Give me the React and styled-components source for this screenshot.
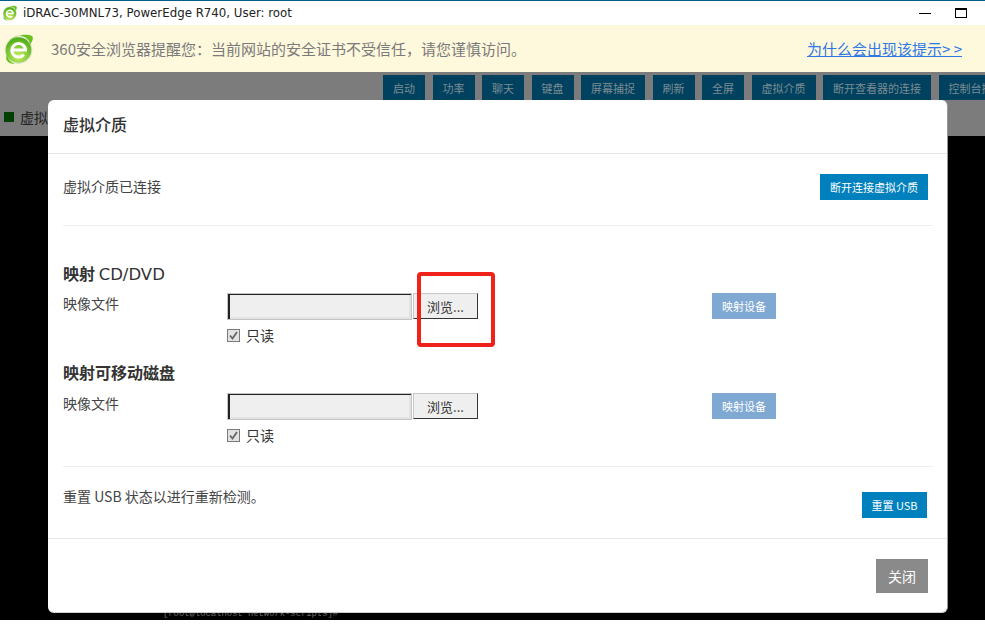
import React from "react";
import styled, { createGlobalStyle } from "styled-components";

const Global = createGlobalStyle`
  html, body { margin: 0; padding: 0; background: #fff; overflow: hidden; }
  body { font-family: "Liberation Sans", "Noto Sans CJK SC", sans-serif; }
  * { box-sizing: border-box; }
`;

const Page = styled.div`
  position: relative;
  width: 985px;
  height: 624px;
  overflow: hidden;
  background: #fff;
`;
const TitleBar = styled.div`
  height: 25px;
  border-top: 1px solid #005f88;
  display: flex;
  align-items: center;
  padding: 0 4px 0 2px;
  font-family: "DejaVu Sans", sans-serif;
  font-size: 11.8px;
  color: #222;
  gap: 5px;
`;
const TitleText = styled.span`
  flex: 1;
`;
const WinControls = styled.div`
  display: flex;
  align-items: center;
  gap: 24px;
  margin-right: 14px;
`;
const MinGlyph = styled.span`
  width: 12px;
  height: 1px;
  background: #000;
`;
const MaxGlyph = styled.span`
  width: 12px;
  height: 10px;
  border: 1px solid #000;
  border-top-width: 2px;
`;
const Notice = styled.div`
  height: 47px;
  background: #fef8dc;
  display: flex;
  align-items: center;
  padding-left: 3px;
  font-family: "Noto Sans CJK SC", sans-serif;
  font-size: 15px;
  color: #7a7a7a;
`;
const NoticeText = styled.span`
  margin-left: 16px;
  flex: 1;
  white-space: nowrap;
`;
const NoticeLink = styled.a`
  color: #2e78e6;
  text-decoration: underline;
  font-size: 15px;
  margin-right: 21px;
  white-space: nowrap;
`;
const CloseX = styled.span`
  color: #c8332a;
  font-weight: bold;
  font-size: 15px;
  line-height: 15px;
  flex: none;
  width: 2px;
  white-space: nowrap;
`;
const Console = styled.div`
  height: 548px;
  background: #000;
`;
const ToolArea = styled.div`
  height: 64px;
  background: #7c7c7c;
  padding-top: 3px;
`;
const Toolbar = styled.div`
  display: flex;
  gap: 7.5px;
  margin-left: 383px;
  width: 640px;
`;
const ToolButton = styled.div`
  height: 25px;
  width: ${(p) => p.$w}px;
  flex: none;
  background: #00415f;
  color: #7c8c92;
  font-family: "Noto Sans CJK SC", sans-serif;
  font-size: 11px;
  display: flex;
  align-items: center;
  justify-content: center;
  white-space: nowrap;
`;
const StatusRow = styled.div`
  display: flex;
  align-items: center;
  gap: 6px;
  margin: 2px 0 0 4px;
  height: 30px;
  color: #222;
  font-family: "Noto Sans CJK SC", sans-serif;
  font-size: 14px;
`;
const StatusDot = styled.span`
  width: 10px;
  height: 10px;
  background: #003f00;
`;
const TerminalLine = styled.div`
  position: absolute;
  left: 163px;
  top: 609px;
  color: #666;
  font-family: "Liberation Mono", monospace;
  font-size: 8.85px;
  line-height: 11px;
  height: 11px;
  overflow: hidden;
`;
const BottomStrip = styled.div`
  position: absolute;
  left: 0;
  right: 0;
  top: 620px;
  height: 4px;
  background: #fff;
`;
const Modal = styled.div`
  position: absolute;
  left: 48px;
  top: 100px;
  width: 900px;
  height: 513px;
  background: #fff;
  border-radius: 6px;
  border-right: 1px solid #999;
  border-bottom: 1px solid #ccc;
  display: flex;
  flex-direction: column;
  color: #333;
  font-family: "Noto Sans CJK SC", sans-serif;
`;
const ModalHeader = styled.div`
  height: 54px;
  border-bottom: 1px solid #e5e5e5;
  padding: 12px 15px 0;
  font-size: 16px;
  font-weight: 500;
  line-height: 24px;
  color: #333;
`;
const ModalBody = styled.div`
  height: 385px;
  padding: 0 15px 0 15px;
  border-bottom: 1px solid #e5e5e5;
`;
const ConnectedRow = styled.div`
  display: flex;
  justify-content: space-between;
  align-items: center;
  height: 72px;
  padding: 0 5px 6px 0;
  font-size: 14px;
  color: #444;
  border-bottom: 1px solid #eee;
  margin-right: -1px;
`;
const ConnectedText = styled.span`
  line-height: 20px;
  margin-top: -1px;
`;
const ActionButton = styled.div`
  background: ${(p) => (p.$muted ? "#7fa9d2" : "#0080bd")};
  color: #fff;
  font-size: 11px;
  height: 26px;
  width: ${(p) => p.$w}px;
  display: flex;
  align-items: center;
  justify-content: center;
  white-space: nowrap;
  flex: none;
`;
const SectionTitle = styled.div`
  font-size: 16px;
  font-weight: 700;
  color: #333;
  line-height: 22px;
  height: 22px;
  margin-top: ${(p) => p.$top}px;
`;
const LatinTitle = styled.span`
  font-family: "DejaVu Sans", sans-serif;
  font-weight: 400;
  font-size: 16.5px;
  color: #333;
`;
const FieldRow = styled.div`
  display: flex;
  margin-top: ${(p) => p.$top}px;
  height: 27px;
`;
const FieldLabel = styled.div`
  width: 164px;
  font-size: 14px;
  line-height: 20px;
  color: #444;
`;
const FileInput = styled.div`
  width: 185px;
  height: 27px;
  background: #efefef;
  border: 1px solid #c4c4c4;
  box-shadow: inset 2px 1px 0 #222, inset -2px -2px 0 #e3e3e3;
  margin-right: 1px;
`;
const BrowseButton = styled.div`
  width: 65px;
  height: 26px;
  background: #efefef;
  border: 1px solid;
  border-color: #c8c8c8 #333 #333 #c8c8c8;
  font-size: 13px;
  color: #333;
  display: flex;
  align-items: center;
  justify-content: center;
`;
const MapSlot = styled.div`
  margin-left: 234px;
`;
const ReadOnly = styled.div`
  display: flex;
  align-items: center;
  gap: 6px;
  margin: 8px 0 0 164px;
  height: 14px;
  font-size: 14px;
  color: #333;
`;
const CheckBox = styled.span`
  width: 13px;
  height: 13px;
  background: #e2e2e2;
  border: 1px solid #7a7a7a;
  display: flex;
  align-items: center;
  justify-content: center;
`;
const ResetRow = styled.div`
  display: flex;
  justify-content: space-between;
  align-items: flex-start;
  margin-top: 24px;
  padding: 19px 6px 0 0;
  border-top: 1px solid #eee;
  font-size: 14px;
  color: #444;
  margin-right: -1px;
`;
const ResetText = styled.div`
  line-height: 22px;
  margin-top: -1px;
`;
const ResetButton = styled.div`
  margin-top: 6px;
`;
const ModalFooter = styled.div`
  flex: 1;
  display: flex;
  justify-content: flex-end;
  padding: 20px 19px 0 0;
`;
const CloseButton = styled.div`
  width: 52px;
  height: 34px;
  background: #8a8a8a;
  color: #fff;
  font-size: 14px;
  display: flex;
  align-items: center;
  justify-content: center;
`;
const Annotation = styled.div`
  position: absolute;
  left: 417px;
  top: 272px;
  width: 78px;
  height: 75px;
  border: 4px solid #f0201a;
  border-radius: 4px;
`;

const Logo360 = ({ size, id }) => (
  <svg width={size} height={size} viewBox="0 0 32 32">
    <defs>
      <radialGradient id={id} cx="50%" cy="75%" r="70%">
        <stop offset="0%" stopColor="#c9ee62" />
        <stop offset="100%" stopColor="#4fae16" />
      </radialGradient>
    </defs>
    <circle cx="15.500" cy="17" r="13.500" fill="#eef2e4" stroke="#d8dccb" strokeWidth="0.800" />
    <circle cx="15.500" cy="17" r="12.800" fill={`url(#${id})`} />
    <path d="M9 17H22.500A6.800 6.800 0 1 0 20.800 21.800" fill="none" stroke="#fff" strokeWidth="3" />
    <path d="M6 9C11 2 24 0 29 3c2 2 0 6-2 9 0-4-3-8-9-9-5-1-9 2-12 6z" fill="#6cc022" />
    <path d="M4 21c1 5 3 8 8 10-3 0-7-1-8.500-4-.5-1.500-.2-3.500.5-6z" fill="#6cc022" />
  </svg>
);

const tools = [
  ["启动", 42], ["功率", 42], ["聊天", 42], ["键盘", 42], ["屏幕捕捉", 64],
  ["刷新", 42], ["全屏", 42], ["虚拟介质", 64], ["断开查看器的连接", 108], ["控制台播放", 75],
];

const FileField = ({ top }) => (
  <>
    <FieldRow $top={top}>
      <FieldLabel>映像文件</FieldLabel>
      <FileInput />
      <BrowseButton>浏览...</BrowseButton>
      <MapSlot><ActionButton $muted $w={64}>映射设备</ActionButton></MapSlot>
    </FieldRow>
    <ReadOnly>
      <CheckBox>
        <svg width="11" height="11" viewBox="0 0 11 11">
          <path d="M2 5.500l2.500 3L9 2" fill="none" stroke="#666" strokeWidth="1.800" />
        </svg>
      </CheckBox>
      只读
    </ReadOnly>
  </>
);

export default function App() {
  return (
    <Page>
      <Global />
      <TitleBar>
        <Logo360 size={16} id="logo-small" />
        <TitleText>iDRAC-30MNL73, PowerEdge R740, User: root</TitleText>
        <WinControls>
          <MinGlyph />
          <MaxGlyph />
        </WinControls>
      </TitleBar>
      <Notice>
        <Logo360 size={32} id="logo-large" />
        <NoticeText>360安全浏览器提醒您：当前网站的安全证书不受信任，请您谨慎访问。</NoticeText>
        <NoticeLink>为什么会出现该提示&gt; &gt;</NoticeLink>
        <CloseX>×</CloseX>
      </Notice>
      <Console>
        <ToolArea>
          <Toolbar>
            {tools.map(([t, w]) => (
              <ToolButton key={t} $w={w}>{t}</ToolButton>
            ))}
          </Toolbar>
          <StatusRow>
            <StatusDot />
            虚拟
          </StatusRow>
        </ToolArea>
      </Console>
      <TerminalLine>[root@localhost network-scripts]#</TerminalLine>
      <BottomStrip />
      <Modal>
        <ModalHeader>虚拟介质</ModalHeader>
        <ModalBody>
          <ConnectedRow>
            <ConnectedText>虚拟介质已连接</ConnectedText>
            <ActionButton $w={108}>断开连接虚拟介质</ActionButton>
          </ConnectedRow>
          <SectionTitle $top={36}>映射 <LatinTitle>CD/DVD</LatinTitle></SectionTitle>
          <FileField top={9} />
          <SectionTitle $top={19}>映射可移动磁盘</SectionTitle>
          <FileField top={10} />
          <ResetRow>
            <ResetText>重置 USB 状态以进行重新检测。</ResetText>
            <ResetButton><ActionButton $w={65}>重置 USB</ActionButton></ResetButton>
          </ResetRow>
        </ModalBody>
        <ModalFooter>
          <CloseButton>关闭</CloseButton>
        </ModalFooter>
      </Modal>
      <Annotation />
    </Page>
  );
}
